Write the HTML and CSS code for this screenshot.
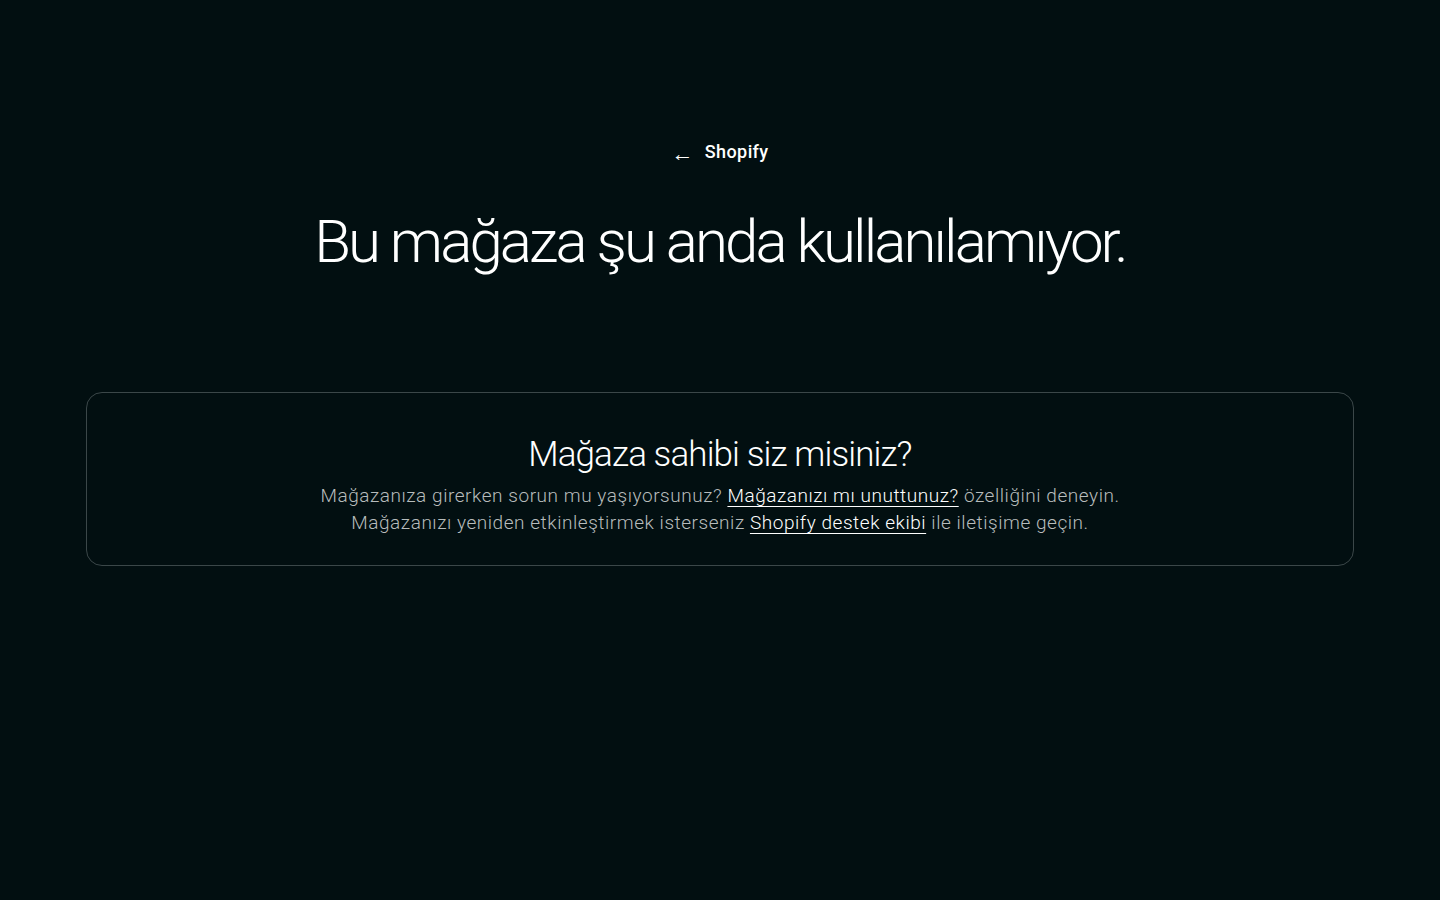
FILE: index.html
```html
<!DOCTYPE html>
<html lang="tr">
<head>
<meta charset="utf-8">
<title>Bu mağaza şu anda kullanılamıyor.</title>
<link rel="stylesheet" href="styles.css">
</head>
<body>
<main class="page">
  <a class="back" href="#"><span class="arrow">&larr;</span><span class="brand">Shopify</span></a>
  <h1 class="title">Bu mağaza şu anda kullanılamıyor.</h1>
  <section class="card">
    <h2 class="card-title">Mağaza sahibi siz misiniz?</h2>
    <p class="card-text">Mağazanıza girerken sorun mu yaşıyorsunuz? <a href="#">Mağazanızı mı unuttunuz?</a> özelliğini deneyin.<br>Mağazanızı yeniden etkinleştirmek isterseniz <a href="#">Shopify destek ekibi</a> ile iletişime geçin.</p>
  </section>
</main>
</body>
</html>
```

FILE: styles.css
```css
html, body {
  margin: 0;
  padding: 0;
  background: #020f11;
  color: #ffffff;
  font-family: Roboto, "Liberation Sans", sans-serif;
}
.page {
  display: flex;
  flex-direction: column;
  align-items: center;
  padding: 138px 86px 0;
}
.back {
  display: flex;
  align-items: center;
  gap: 11px;
  color: #ffffff;
  text-decoration: none;
  font-size: 18px;
  line-height: 28px;
  font-weight: 500;
  letter-spacing: 0.4px;
}
.arrow {
  font-size: 22px;
  font-weight: 300;
  position: relative;
  top: 2px;
}
.title {
  margin: 38px 0 0;
  font-size: 60px;
  line-height: 76px;
  font-weight: 300;
  letter-spacing: -2.9px;
}
.card {
  align-self: stretch;
  margin-top: 112px;
  border: 1px solid #3b4749;
  border-radius: 16px;
  padding: 40px 20px 29px;
  text-align: center;
}
.card-title {
  margin: 0;
  font-size: 35px;
  line-height: 44px;
  font-weight: 300;
  letter-spacing: -0.9px;
}
.card-text {
  margin: 5px 0 0;
  font-size: 19px;
  line-height: 27px;
  font-weight: 300;
  color: #b7bcbc;
  letter-spacing: 0.55px;
}
.card-text a {
  color: #ffffff;
  text-decoration: underline;
  text-underline-offset: 4px;
  text-decoration-thickness: 1px;
}
```
